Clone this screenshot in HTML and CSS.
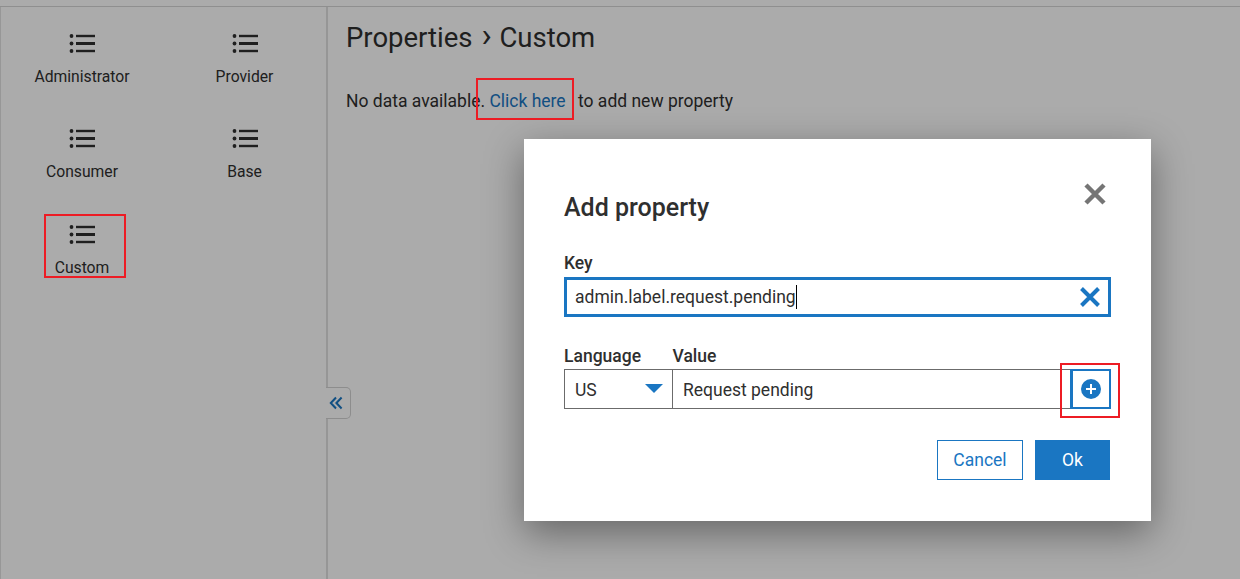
FILE: index.html
```html
<!DOCTYPE html>
<html lang="en">
<head>
    <meta charset="UTF-8">
    <meta name="viewport" content="width=device-width, initial-scale=1.0">
    <title>Properties - Custom</title>
    <link rel="stylesheet" href="styles.css">
</head>
<body>

    <svg class="defs" width="0" height="0">
        <symbol id="list" viewBox="0 0 26 20">
            <circle cx="2.5" cy="2" r="1.9"/>
            <circle cx="2.5" cy="9.5" r="1.9"/>
            <circle cx="2.5" cy="17" r="1.9"/>
            <rect x="7" y="0.8" width="19" height="2.4"/>
            <rect x="7" y="8" width="19" height="3"/>
            <rect x="7" y="15.8" width="19" height="2.4"/>
        </symbol>
    </svg>

    <div class="topbar"></div>

    <div class="layout">
        <nav class="sidebar">
            <a class="tile"><svg class="tile-icon"><use href="#list"/></svg><span>Administrator</span></a>
            <a class="tile"><svg class="tile-icon"><use href="#list"/></svg><span>Provider</span></a>
            <a class="tile"><svg class="tile-icon"><use href="#list"/></svg><span>Consumer</span></a>
            <a class="tile"><svg class="tile-icon"><use href="#list"/></svg><span>Base</span></a>
            <a class="tile"><svg class="tile-icon"><use href="#list"/></svg><span>Custom</span></a>
            <button class="collapse">
                <svg width="14" height="14" viewBox="0 0 14 14"><path d="M7 1.5 1.8 7 7 12.5M12.6 1.5 7.4 7l5.2 5.5"/></svg>
            </button>
        </nav>

        <main class="content">
            <h1>Properties <span class="sep">›</span> Custom</h1>
            <p class="empty">No data available. <a class="link">Click here</a> <span class="after-link">to add new property</span></p>
        </main>
    </div>

    <div class="overlay"></div>

    <div class="modal">
        <div class="modal-head">
            <h2>Add property</h2>
            <svg class="close" width="24" height="24" viewBox="0 0 24 24"><path d="M3 3l18 18M21 3 3 21"/></svg>
        </div>

        <label class="label">Key</label>
        <div class="field-key">
            <span class="typed">admin.label.request.pending</span>
            <svg class="clear" width="22" height="22" viewBox="0 0 22 22"><path d="M2.5 2.5l17 17M19.5 2.5l-17 17"/></svg>
        </div>

        <div class="row-labels">
            <label class="label lang-col">Language</label>
            <label class="label">Value</label>
        </div>
        <div class="row">
            <div class="select">US<span class="arrow"></span></div>
            <div class="value">Request pending</div>
            <button class="add">
                <svg width="20" height="20" viewBox="0 0 20 20"><circle cx="10" cy="10" r="10"/><path d="M10 5v10M5 10h10"/></svg>
            </button>
        </div>

        <div class="actions">
            <button class="btn btn-cancel">Cancel</button>
            <button class="btn btn-ok">Ok</button>
        </div>
    </div>

    <!-- red boxes of the screenshot -->
    <div class="mark mark-custom"></div>
    <div class="mark mark-link"></div>
    <div class="mark mark-add"></div>

</body>
</html>
```

FILE: styles.css
```css
* {
    box-sizing: border-box;
}
html, body {
    height: 100%;
}
body {
    margin: 0;
    font-family: Roboto, "Liberation Sans", sans-serif;
    background-color: #fff;
    color: #2f2f2f;
    overflow: hidden;
}
.defs {
    position: absolute;
}
.topbar {
    height: 7px;
    border-bottom: 1px solid #d6d6d6;
}
.layout {
    display: flex;
    height: 572px;
}
.sidebar {
    position: relative;
    width: 328px;
    padding-top: 26.9px;
    border-left: 1px solid #e2e2e2;
    border-right: 2px solid #e0e0e0;
    display: grid;
    grid-template-columns: 162px 163px;
    grid-auto-rows: 95.5px;
    align-content: start;
}
.tile {
    display: flex;
    flex-direction: column;
    align-items: center;
    font-size: 15.7px;
    line-height: 19px;
}
.tile-icon {
    width: 26px;
    height: 20px;
    margin-bottom: 13px;
    fill: #2f2f2f;
}
.collapse {
    position: absolute;
    left: 325px;
    top: 380px;
    width: 25px;
    height: 32px;
    padding: 0 4px 0 0;
    background-color: #fff;
    border: 1px solid #d2d2d2;
    border-left: none;
    border-radius: 0 5px 5px 0;
    display: flex;
    align-items: center;
    justify-content: center;
}
.collapse path {
    fill: none;
    stroke: #1a76c2;
    stroke-width: 2;
}
.content {
    flex: 1;
    padding-left: 18px;
}
h1 {
    margin: 13px 0 0;
    font-size: 27.5px;
    font-weight: 400;
    line-height: 35px;
}
.sep {
    font-size: 34px;
    line-height: 20px;
    margin: 0 1px 0 2px;
}
.empty {
    margin: 35px 0 0;
    font-size: 17.5px;
    line-height: 22px;
}
.link {
    color: #1a76c2;
}
.after-link {
    margin-left: 8px;
}
.overlay {
    position: absolute;
    inset: 0;
    z-index: 10;
    background-color: rgba(0, 0, 0, 0.33);
}
.modal {
    position: absolute;
    left: 524px;
    top: 139px;
    width: 627px;
    height: 382px;
    z-index: 11;
    padding: 0 41px 0 40px;
    background-color: #fff;
    box-shadow: 0 12px 36px rgba(0, 0, 0, 0.4);
}
.modal-head {
    display: flex;
    justify-content: space-between;
    padding-top: 43px;
    height: 115px;
}
h2 {
    margin: 11px 0 0;
    font-size: 25px;
    font-weight: 500;
    line-height: 30px;
}
.close {
    margin-right: 3px;
}
.close path {
    fill: none;
    stroke: #757575;
    stroke-width: 4.5;
}
.label {
    display: block;
    font-size: 17.5px;
    font-weight: 500;
    line-height: 19px;
}
.field-key {
    height: 40px;
    width: 547px;
    margin-top: 4px;
    padding: 0 7px 0 8px;
    border: 3px solid #1a76c2;
    display: flex;
    align-items: center;
    justify-content: space-between;
    font-size: 17.5px;
}
.typed {
    border-right: 1px solid #000;
    line-height: 24px;
}
.clear path {
    fill: none;
    stroke: #1a76c2;
    stroke-width: 4;
}
.row-labels {
    display: flex;
    margin-top: 30px;
}
.lang-col {
    width: 108.5px;
}
.row {
    display: flex;
    height: 40px;
    width: 547px;
    margin-top: 3px;
    font-size: 17.5px;
}
.select {
    position: relative;
    width: 109px;
    padding-left: 10px;
    line-height: 40px;
    border: 1px solid #6b6b6b;
}
.arrow {
    position: absolute;
    right: 9px;
    top: 14px;
    border-left: 9.5px solid transparent;
    border-right: 9.5px solid transparent;
    border-top: 9px solid #1a76c2;
}
.value {
    flex: 1;
    padding-left: 10px;
    line-height: 40px;
    border: 1px solid #6b6b6b;
    border-left: none;
    border-right: none;
}
.add {
    width: 41px;
    padding: 0;
    background-color: #fff;
    border: 2px solid #1a76c2;
    border-left-width: 3px;
    display: flex;
    align-items: center;
    justify-content: center;
}
.add circle {
    fill: #1a76c2;
}
.add path {
    fill: none;
    stroke: #fff;
    stroke-width: 2;
}
.actions {
    display: flex;
    justify-content: flex-end;
    gap: 12px;
    margin-top: 31px;
}
.btn {
    height: 40px;
    padding: 0;
    font-family: inherit;
    font-size: 17.5px;
}
.btn-cancel {
    width: 86px;
    color: #1a76c2;
    background-color: #fff;
    border: 1px solid #1a76c2;
}
.btn-ok {
    width: 75px;
    color: #fff;
    background-color: #1a76c2;
    border: none;
}
.mark {
    position: absolute;
    z-index: 20;
    border: 2px solid #ed1c24;
}
.mark-custom {
    left: 44px;
    top: 214px;
    width: 82px;
    height: 64px;
}
.mark-link {
    left: 476px;
    top: 78px;
    width: 98px;
    height: 42px;
}
.mark-add {
    left: 1060px;
    top: 363px;
    width: 60px;
    height: 55px;
}
```
